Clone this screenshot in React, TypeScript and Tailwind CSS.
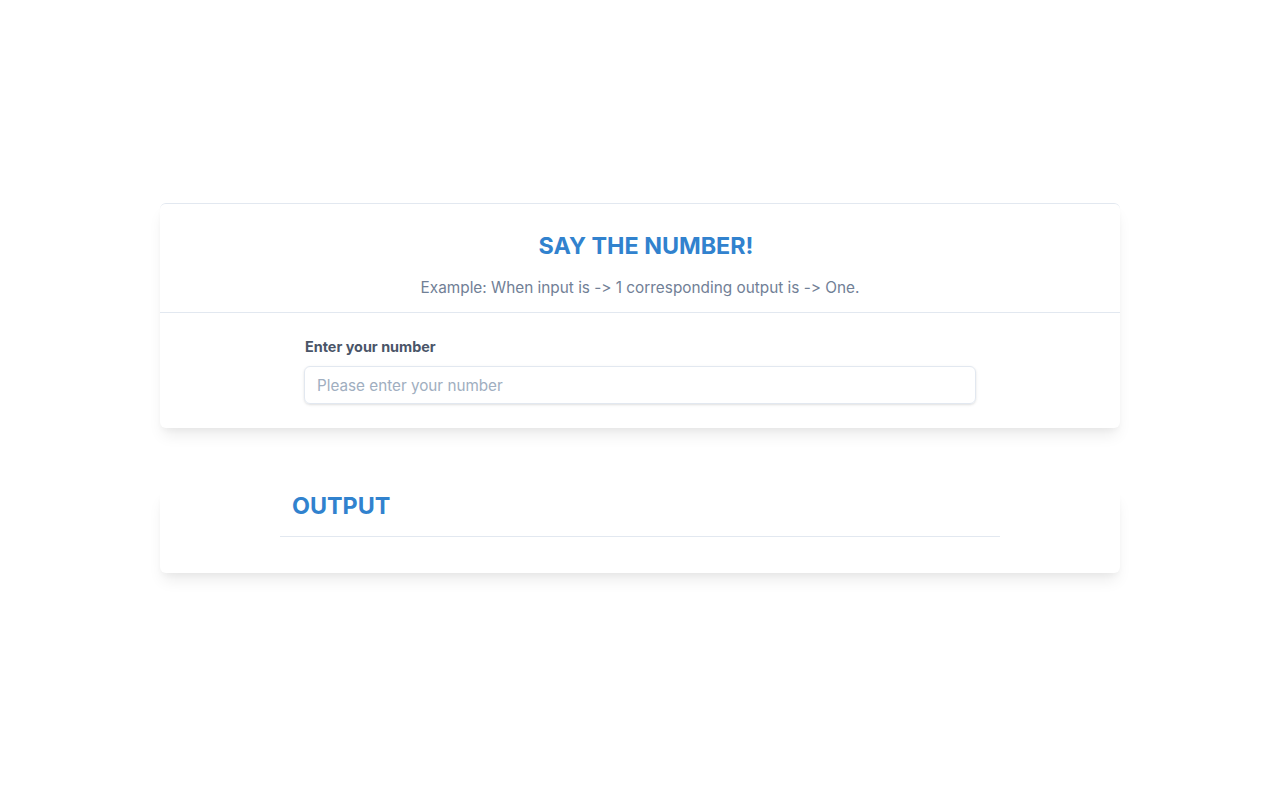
export default function App() {
  return (
    <div
      className="min-h-screen bg-white pt-[203px] [font-feature-settings:'calt'_0]"
      style={{ fontFamily: "Inter, 'Noto Sans', sans-serif" }}
    >
      <div className="mx-auto w-[960px] rounded-md border-t border-[#e2e8f0] bg-white shadow-[0_10px_15px_-3px_rgba(0,0,0,0.08),0_4px_6px_-2px_rgba(0,0,0,0.04)]">
        <div className="flex flex-col items-center pt-[28px] pb-[12px]">
          <h1 className="pl-3 text-[23.3px] font-bold leading-[28px] text-[#3182ce]">SAY THE NUMBER!</h1>
          <p className="mt-[16px] text-[15.35px] leading-6 text-[#718096]">
            Example: When input is -&gt; 1 corresponding output is -&gt; One.
          </p>
        </div>
        <div className="border-t border-[#e2e8f0] pt-[24px] pb-[24px]">
          <div className="mx-auto w-[672px]">
            <label className="mb-[9px] block pl-px text-[14.4px] font-bold leading-5 text-[#4a5568]">
              Enter your number
            </label>
            <input
              type="text"
              placeholder="Please enter your number"
              className="h-[38px] w-full rounded-md border border-[#e2e8f0] px-3 text-[15.25px] text-[#1a202c] shadow-sm outline-none placeholder:text-[#a0aec0]"
            />
          </div>
        </div>
      </div>

      <div className="mx-auto mt-[62px] w-[960px] rounded-md bg-white pb-[36px] shadow-[0_10px_15px_-3px_rgba(0,0,0,0.08),0_4px_6px_-2px_rgba(0,0,0,0.04)]">
        <div className="mx-auto w-[720px]">
          <h2 className="px-3 text-[23.3px] font-bold leading-8 text-[#3182ce]">OUTPUT</h2>
          <div className="mt-[14px] border-t border-[#e2e8f0]" />
        </div>
      </div>
    </div>
  );
}
